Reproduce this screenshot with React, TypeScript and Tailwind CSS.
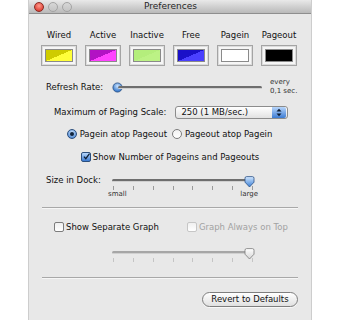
import React from "react";

const swatches = [
  { label: "Wired", a: "#cfcc00", b: "#ffff3a" },
  { label: "Active", a: "#b212c4", b: "#ff44ff" },
  { label: "Inactive", a: "#b4ee7c", b: "#bcf285" },
  { label: "Free", a: "#1a10c8", b: "#4a40ff" },
  { label: "Pagein", a: "#ffffff", b: "#ffffff" },
  { label: "Pageout", a: "#000000", b: "#000000" },
];

function Swatch({ a, b }: { a: string; b: string }) {
  return (
    <div className="w-[36px] h-[21px] border border-[#a4a4a4] bg-[#f6f6f6] p-[3px] shadow-[inset_0_0_0_1px_#dcdcdc]">
      <div
        className="w-full h-full border border-[#8a8a8a]"
        style={{ background: `linear-gradient(to bottom right, ${a} 50%, ${b} 50%)` }}
      />
    </div>
  );
}

function RoundKnob() {
  return (
    <svg width="11" height="11" viewBox="0 0 11 11">
      <defs>
        <radialGradient id="rk" cx="50%" cy="35%" r="60%">
          <stop offset="0" stopColor="#cfe6ff" />
          <stop offset="1" stopColor="#2f73c9" />
        </radialGradient>
      </defs>
      <circle cx="5.5" cy="5.5" r="4.6" fill="url(#rk)" stroke="#2b4f80" strokeWidth="0.8" />
    </svg>
  );
}

function PointerKnob({ blue }: { blue: boolean }) {
  return (
    <svg width="11" height="12" viewBox="0 0 11 12">
      <defs>
        <linearGradient id={blue ? "pkb" : "pkg"} x1="0" y1="0" x2="0" y2="1">
          <stop offset="0" stopColor={blue ? "#d3e8ff" : "#ffffff"} />
          <stop offset="1" stopColor={blue ? "#3a7fd6" : "#d6d6d6"} />
        </linearGradient>
      </defs>
      <path
        d="M1 2.2 Q1 0.6 2.6 0.6 H8.4 Q10 0.6 10 2.2 V6.2 L5.5 11 L1 6.2 Z"
        fill={`url(#${blue ? "pkb" : "pkg"})`}
        stroke={blue ? "#2d5285" : "#7a7a7a"}
        strokeWidth="0.8"
      />
    </svg>
  );
}

function Ticks({ faint }: { faint?: boolean }) {
  return (
    <div className="flex justify-between w-[142px] px-[1px]">
      {Array.from({ length: 8 }).map((_, i) => (
        <div key={i} className={`w-px h-[4px] ${faint ? "bg-[#c4c4c4]" : "bg-[#9a9a9a]"}`} />
      ))}
    </div>
  );
}

function Track({ width, dark }: { width: number; dark?: boolean }) {
  return (
    <div
      className={`h-[3px] rounded-full ${dark ? "bg-[#6e6e6e]" : "bg-[#a6a6a6]"} border-b border-[#d0d0d0]`}
      style={{ width }}
    />
  );
}

function Radio({ on }: { on: boolean }) {
  return on ? (
    <div className="w-[10px] h-[10px] rounded-full border border-[#2c4f7e] bg-[radial-gradient(circle_at_50%_35%,#d2e7ff,#2f72c8)] flex items-center justify-center">
      <div className="w-[4px] h-[4px] rounded-full bg-[#10243d]" />
    </div>
  ) : (
    <div className="w-[10px] h-[10px] rounded-full border border-[#7c7c7c] bg-gradient-to-b from-[#f2f2f2] to-[#ffffff]" />
  );
}

function Check({ on, disabled }: { on?: boolean; disabled?: boolean }) {
  if (on)
    return (
      <div className="w-[10px] h-[10px] rounded-[2px] border border-[#2c4f7e] bg-gradient-to-b from-[#b9d8fb] to-[#3a7ad0] flex items-center justify-center">
        <svg width="9" height="9" viewBox="0 0 9 9" className="-mt-[2px] ml-[1px]">
          <path d="M1.2 4.6 L3.6 7.2 L8.4 0.8" fill="none" stroke="#0e1e33" strokeWidth="1.7" />
        </svg>
      </div>
    );
  return (
    <div
      className={`w-[10px] h-[10px] rounded-[2px] border bg-gradient-to-b from-[#f0f0f0] to-white ${
        disabled ? "border-[#c6c6c6]" : "border-[#7c7c7c]"
      }`}
    />
  );
}

function Separator() {
  return <div className="mx-[13px] h-[2px] border-t border-[#a8a8a8] border-b border-b-[#f6f6f6]" />;
}

export default function App() {
  return (
    <div
      className="w-[340px] h-[320px] bg-white overflow-hidden text-[8.5px] text-[#111]"
      style={{ fontFamily: '"DejaVu Sans", Verdana, sans-serif' }}
    >
      <div className="ml-[28px] w-[284px] h-[320px] bg-[#e8e8e8] border-x border-[#cdcdcd] flex flex-col">
        {/* title bar */}
        <div className="h-[14px] shrink-0 relative flex items-center bg-gradient-to-b from-[#e9e9e9] to-[#b9b9b9] border-b border-[#8e8e8e]">
          <div className="flex items-center gap-[4px] pl-[5px]">
            <div className="w-[10px] h-[10px] rounded-full border border-[#8a2a24] bg-[radial-gradient(circle_at_50%_35%,#ff9a8c,#d3251a)]" />
            <div className="w-[10px] h-[10px] rounded-full border border-[#a4a4a4] bg-gradient-to-b from-[#d7d7d7] to-[#c4c4c4]" />
            <div className="w-[10px] h-[10px] rounded-full border border-[#a4a4a4] bg-gradient-to-b from-[#d7d7d7] to-[#c4c4c4]" />
          </div>
          <div className="absolute inset-0 flex items-center justify-center text-[9px] text-[#262626] pl-[1px]">
            Preferences
          </div>
        </div>

        {/* colour swatches */}
        <div className="mt-[15px] h-[12px] flex gap-[8px] pl-[12px]">
          {swatches.map((s) => (
            <div key={s.label} className="w-[36px] flex justify-center leading-[12px] whitespace-nowrap">
              {s.label}
            </div>
          ))}
        </div>
        <div className="mt-[4px] flex gap-[8px] pl-[12px]">
          {swatches.map((s) => (
            <Swatch key={s.label} a={s.a} b={s.b} />
          ))}
        </div>

        {/* refresh rate */}
        <div className="mt-[12px] h-[18px] flex items-center pl-[17px]">
          <span className="w-[66px]">Refresh Rate:</span>
          <div className="flex items-center">
            <RoundKnob />
            <div className="-ml-[5px]">
              <Track width={144} dark />
            </div>
          </div>
          <div className="ml-[8px] text-[7px] leading-[9.5px] text-[#333]">
            every
            <br />
            0,1 sec.
          </div>
        </div>

        {/* paging scale */}
        <div className="mt-[9px] h-[14px] flex items-center pl-[25px]">
          <span>Maximum of Paging Scale:</span>
          <div className="ml-[9px] w-[113px] h-[13px] flex items-center rounded-[3px] border border-[#8c8c8c] bg-gradient-to-b from-white to-[#e2e2e2]">
            <span className="flex-1 pl-[5px] leading-[11px]">250 (1 MB/sec.)</span>
            <div className="w-[14px] h-full mr-[1px] rounded-r-[2px] bg-gradient-to-b from-[#b8d6fb] to-[#3b7bd2] flex items-center justify-center">
              <svg width="6" height="9" viewBox="0 0 6 9">
                <path d="M0.5 3.6 L3 0.8 L5.5 3.6 Z M0.5 5.4 L3 8.2 L5.5 5.4 Z" fill="#0d1d33" />
              </svg>
            </div>
          </div>
        </div>

        {/* radios */}
        <div className="mt-[9px] h-[12px] flex items-center justify-center gap-[3px] pr-[1px]">
          <Radio on />
          <span className="mr-[2px]">Pagein atop Pageout</span>
          <Radio on={false} />
          <span>Pageout atop Pagein</span>
        </div>

        {/* show number */}
        <div className="mt-[11px] h-[12px] flex items-center justify-center gap-[2px]">
          <Check on />
          <span>Show Number of Pageins and Pageouts</span>
        </div>

        {/* size in dock */}
        <div className="mt-[11px] h-[12px] flex items-center pl-[17px]">
          <span className="w-[66px]">Size in Dock:</span>
          <div className="flex items-center">
            <Track width={138} dark />
            <div className="-ml-[6px] mt-[3px]">
              <PointerKnob blue />
            </div>
          </div>
        </div>
        <div className="pl-[83px] flex flex-col">
          <Ticks />
          <div className="w-[150px] -ml-[4px] flex justify-between text-[7px] leading-[9px] text-[#333]">
            <span>small</span>
            <span>large</span>
          </div>
        </div>

        <div className="mt-[8px]">
          <Separator />
        </div>

        {/* separate graph */}
        <div className="mt-[12px] h-[12px] flex items-center pl-[25px]">
          <Check />
          <span className="ml-[2px]">Show Separate Graph</span>
          <div className="ml-[28px]">
            <Check disabled />
          </div>
          <span className="ml-[2px] text-[#a2a2a2]">Graph Always on Top</span>
        </div>

        <div className="mt-[13px] h-[12px] flex items-center pl-[83px]">
          <Track width={138} />
          <div className="-ml-[6px] mt-[3px]">
            <PointerKnob blue={false} />
          </div>
        </div>
        <div className="pl-[83px]">
          <Ticks faint />
        </div>

        <div className="mt-[15px]">
          <Separator />
        </div>

        <div className="mt-[13px] flex justify-end pr-[13px]">
          <button className="w-[96px] h-[15px] rounded-full border border-[#7e7e7e] bg-gradient-to-b from-white to-[#e0e0e0] text-[8.5px] leading-[13px] shadow-[0_1px_0_#f8f8f8]">
            Revert to Defaults
          </button>
        </div>
      </div>
    </div>
  );
}
